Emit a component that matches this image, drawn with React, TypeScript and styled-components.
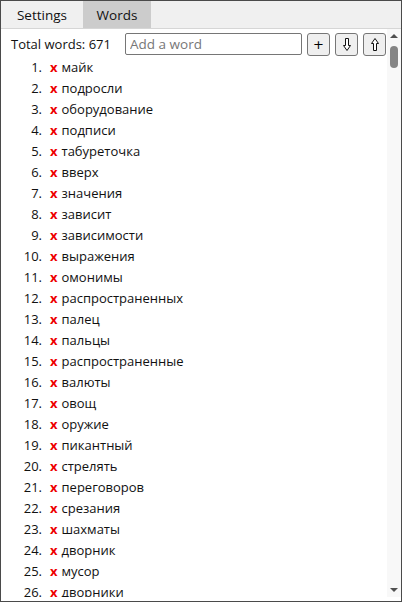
import React from "react";
import styled, { createGlobalStyle } from "styled-components";

const words = [
  "майк",
  "подросли",
  "оборудование",
  "подписи",
  "табуреточка",
  "вверх",
  "значения",
  "зависит",
  "зависимости",
  "выражения",
  "омонимы",
  "распространенных",
  "палец",
  "пальцы",
  "распространенные",
  "валюты",
  "овощ",
  "оружие",
  "пикантный",
  "стрелять",
  "переговоров",
  "срезания",
  "шахматы",
  "дворник",
  "мусор",
  "дворники",
  "мусорка",
  "решение",
];

const GlobalStyle = createGlobalStyle`
  html, body {
    margin: 0;
    padding: 0;
    background: #ffffff;
  }
  * {
    box-sizing: border-box;
  }
`;

const ArrowDown = () => (
  <svg width="8" height="13" viewBox="0 0 8 13">
    <path
      d="M2.5 0.5 H5.5 V7.5 H7.5 L4 12.5 L0.5 7.5 H2.5 Z"
      fill="#fff"
      stroke="#111"
      strokeWidth="1"
      strokeLinejoin="miter"
    />
  </svg>
);

const ArrowUp = () => (
  <svg width="8" height="13" viewBox="0 0 8 13">
    <path
      d="M2.5 12.5 H5.5 V5.5 H7.5 L4 0.5 L0.5 5.5 H2.5 Z"
      fill="#fff"
      stroke="#111"
      strokeWidth="1"
      strokeLinejoin="miter"
    />
  </svg>
);

const App = () => {
  return (
    <>
      <GlobalStyle />
      <Frame>
        <TabBar>
          <Tab>Settings</Tab>
          <Tab $active>Words</Tab>
        </TabBar>
        <Body>
          <Content>
            <Header>
              <Total>Total words: 671</Total>
              <WordInput placeholder="Add a word" />
              <SmallButton>+</SmallButton>
              <SmallButton>
                <ArrowDown />
              </SmallButton>
              <SmallButton>
                <ArrowUp />
              </SmallButton>
            </Header>
            <List>
              {words.map((w, i) => (
                <Row key={i}>
                  <Num>{i + 1}.</Num>
                  <Remove>x</Remove>
                  <Word>{w}</Word>
                </Row>
              ))}
            </List>
          </Content>
          <Scrollbar>
            <svg width="14" height="14" viewBox="0 0 14 14">
              <path d="M3 9 L7 5 L11 9 Z" fill="#505050" />
            </svg>
            <Track>
              <Thumb />
            </Track>
            <svg width="14" height="14" viewBox="0 0 14 14">
              <path d="M3 5 L7 9 L11 5 Z" fill="#505050" />
            </svg>
          </Scrollbar>
        </Body>
      </Frame>
    </>
  );
};

export default App;

const Frame = styled.div`
  width: 402px;
  height: 602px;
  border: 1px solid #4a4a4a;
  display: flex;
  flex-direction: column;
  font-family: "Open Sans", "Noto Sans", sans-serif;
  font-size: 13px;
  color: #111;
  background: #fff;
  overflow: hidden;
`;
const TabBar = styled.div`
  height: 28px;
  flex-shrink: 0;
  display: flex;
  background: #f0f0f0;
  border-bottom: 1px solid #d6d6d6;
`;
const Tab = styled.div<{ $active?: boolean }>`
  width: ${(p) => (p.$active ? "68px" : "82px")};
  display: flex;
  align-items: center;
  justify-content: center;
  font-size: 13.5px;
  background: ${(p) => (p.$active ? "#cccccc" : "#f0f0f0")};
`;
const Body = styled.div`
  flex: 1;
  display: flex;
  min-height: 0;
  margin-bottom: 4px;
`;
const Content = styled.div`
  flex: 1;
  overflow: hidden;
  padding: 4px 0 0 0;
`;
const Header = styled.div`
  display: flex;
  align-items: center;
  height: 22px;
  padding-left: 10px;
`;
const Total = styled.div`
  width: 114px;
  white-space: nowrap;
`;
const WordInput = styled.input`
  width: 177px;
  height: 22px;
  border: 1px solid #767676;
  border-radius: 2px;
  padding: 0 4px;
  font-family: inherit;
  font-size: 13.5px;
  color: #111;
  outline: none;
  &::placeholder {
    color: #777;
  }
`;
const SmallButton = styled.button`
  width: 23px;
  height: 23px;
  margin-left: 5px;
  padding: 0;
  border: 1px solid #767676;
  border-radius: 3px;
  background: #efefef;
  font-family: "DejaVu Sans", sans-serif;
  font-size: 13px;
  color: #000;
  display: flex;
  align-items: center;
  justify-content: center;
`;
const List = styled.div`
  margin-top: 1px;
`;
const Row = styled.div`
  display: flex;
  align-items: center;
  height: 21px;
  white-space: nowrap;
`;
const Num = styled.span`
  width: 34px;
  margin-left: 7px;
  text-align: right;
`;
const Remove = styled.span`
  margin-left: 8px;
  color: #ee0000;
  font-weight: bold;
`;
const Word = styled.span`
  margin-left: 4px;
`;
const Scrollbar = styled.div`
  width: 14px;
  flex-shrink: 0;
  display: flex;
  flex-direction: column;
  align-items: center;
  background: #f8f8f8;
`;
const Track = styled.div`
  flex: 1;
  width: 100%;
  display: flex;
  justify-content: center;
  padding-top: 3px;
`;
const Thumb = styled.div`
  width: 8px;
  height: 22px;
  border-radius: 4px;
  background: #858585;
`;
